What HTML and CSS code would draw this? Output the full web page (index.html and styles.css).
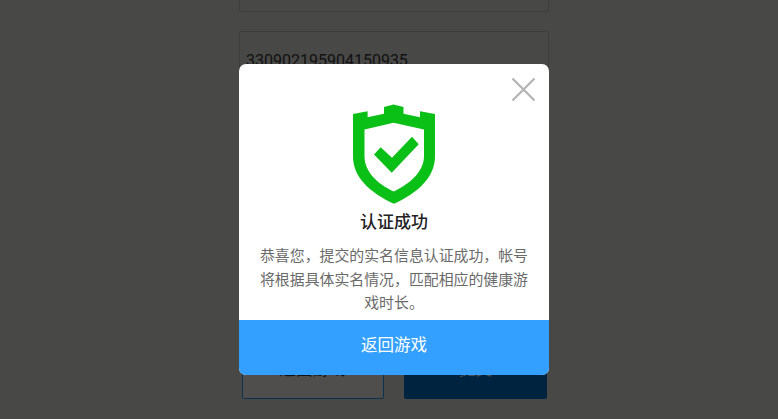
FILE: index.html
```html
<!DOCTYPE html>
<html lang="zh-CN">
<head>
<meta charset="utf-8">
<title>认证成功</title>
<link rel="stylesheet" href="styles.css">
</head>
<body>
<main class="page">
  <div class="field field-first"></div>
  <div class="field field-id">330902195904150935</div>
  <div class="actions">
    <button class="btn btn-outline">返回游戏</button>
    <button class="btn btn-solid">提交</button>
  </div>
</main>
<section class="modal">
  <button class="close" aria-label="关闭">
    <svg width="25" height="25" viewBox="0 0 25 25"><path d="M1.5 1.5L23.5 23.5M23.5 1.5L1.5 23.5" stroke="#b3b3b3" stroke-width="2.2" fill="none"/></svg>
  </button>
  <div class="modal-body">
    <svg class="shield" width="84" height="100" viewBox="352 104.5 84 100">
      <path fill="#0abf16" fill-rule="evenodd" d="M353 114.5L367.6 111.7V117.7L384 114.3V107.5L393.5 105L403.5 107.5V114.3L420 117.7V111.7L435 114.5V156.7C435 178 418 193 394 204.3C370 193 353 178 353 156.7ZM393.5 123.3L364.5 130V156.7C364.5 172 377 184 393.8 192C410 184 424 172 424 156.7V130Z"/>
      <path fill="#0abf16" d="M374 155L380.7 147.7L392 158.3L412 137.3L418.7 144.7L391.7 173.3Z"/>
    </svg>
    <h2 class="title">认证成功</h2>
    <p class="text">恭喜您，提交的实名信息认证成功，帐号将根据具体实名情况，匹配相应的健康游戏时长。</p>
  </div>
  <button class="confirm">返回游戏</button>
</section>
</body>
</html>
```
FILE: styles.css
```css
* { box-sizing: border-box; }
html, body { margin: 0; height: 100%; }
body {
  background: #484847;
  font-family: "Noto Sans CJK SC", "Noto Sans", sans-serif;
  overflow: hidden;
  position: relative;
}
.page {
  width: 310px;
  margin-left: 239px;
  display: flex;
  flex-direction: column;
}
.field {
  border: 1px solid #3d3d3c;
  border-radius: 2px;
  height: 60px;
  font-family: Roboto, sans-serif;
  font-size: 16px;
  color: #111;
}
.field-first { margin-top: -48px; }
.field-id {
  margin-top: 19px;
  padding: 19px 0 0 6px;
  line-height: 20px;
}
.actions {
  display: flex;
  justify-content: space-between;
  margin-top: 254px;
  padding: 0 2px 0 2.5px;
}
.btn {
  height: 54px;
  font: 16.5px "Noto Sans CJK SC", sans-serif;
  border-radius: 2px;
  padding: 0 0 8px;
}
.btn-outline {
  width: 142px;
  background: #4f4e4d;
  border: 1px solid #0b3350;
  color: #111;
}
.btn-solid {
  width: 143px;
  background: #00233f;
  border: 0;
  color: #4c4c4c;
}
.modal {
  position: absolute;
  left: 239px;
  top: 64px;
  width: 310px;
  height: 311px;
  background: #fff;
  border-radius: 7px;
  overflow: hidden;
  display: flex;
  flex-direction: column;
}
.close {
  position: absolute;
  right: 13px;
  top: 13px;
  width: 25px;
  height: 25px;
  padding: 0;
  border: 0;
  background: none;
  display: block;
}
.close svg { display: block; }
.modal-body {
  flex: 1;
  padding: 40px 20px 0;
  display: flex;
  flex-direction: column;
  align-items: center;
}
.shield { display: block; flex: none; }
.title {
  margin: 5px 0 0;
  font-size: 17px;
  font-weight: 500;
  line-height: 24px;
  color: #222;
}
.text {
  margin: 10px 0 0;
  width: 272px;
  font-size: 14.9px;
  line-height: 23.5px;
  color: #6a6a6a;
  text-align: center;
}
.confirm {
  flex: none;
  height: 55px;
  border: 0;
  background: #339ffe;
  color: #fff;
  font: 16.5px "Noto Sans CJK SC", sans-serif;
  padding: 0 0 8px;
}
```
